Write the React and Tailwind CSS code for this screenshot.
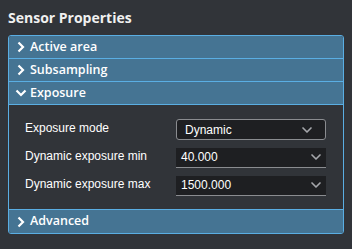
import { ChevronDown } from "lucide-react";

const sans = { fontFamily: '"Open Sans", sans-serif' };

function Chevron({ open }) {
    return open ? (
        <svg width="12" height="10" viewBox="0 0 12 10" className="ml-[3px] mr-[3px]">
            <polyline points="1.5,2.5 6,7 10.5,2.5" fill="none" stroke="white" strokeWidth="2.2" />
        </svg>
    ) : (
        <svg width="10" height="12" viewBox="0 0 10 12" className="ml-[4px] mr-[4px]">
            <polyline points="2.5,1.5 7,6 2.5,10.5" fill="none" stroke="white" strokeWidth="2.2" />
        </svg>
    );
}

function Header({ title, open, last }) {
    return (
        <div
            className={`flex h-[23px] items-center bg-[#457493] pl-[3px] text-white ${last ? "" : "border-b border-[#5aaee3]"}`}
        >
            <Chevron open={open} />
            <span className="text-[12.5px] font-semibold" style={sans}>
                {title}
            </span>
        </div>
    );
}

function Field({ label, value, boxed }) {
    return (
        <div className="flex h-[21px] items-center">
            <span className="w-[151px] pb-[3px] text-[12px] text-white">{label}</span>
            {boxed ? (
                <div className="flex h-[21px] w-[150px] items-center justify-between rounded-[3px] border border-[#8a8c90] bg-[#1e1f22] pl-[8px] pr-[10px]">
                    <span className="text-[12px] text-white">{value}</span>
                    <ChevronDown size={16} strokeWidth={2.5} className="text-[#a5a7ab]" />
                </div>
            ) : (
                <div className="flex h-[20px] w-[150px] items-center justify-between border-b border-[#8a8c90] bg-[#1e1f22] pl-[5px] pr-[2px]">
                    <span className="text-[12px] text-white">{value}</span>
                    <ChevronDown size={16} strokeWidth={2.5} className="text-[#a5a7ab]" />
                </div>
            )}
        </div>
    );
}

export default function App() {
    return (
        <div
            className="h-[249px] w-[352px] bg-[#313439] px-[8px] pt-[7px]"
            style={{ fontFamily: '"Liberation Sans", Arial, sans-serif' }}
        >
            <h1 className="mb-[6px] text-[14px] font-bold leading-[22px] text-[#f0f0f0]" style={sans}>
                Sensor Properties
            </h1>
            <div className="w-[336px] overflow-hidden rounded-[3px] border border-[#5aaee3]">
                <Header title="Active area" />
                <Header title="Subsampling" />
                <Header title="Exposure" open />
                <div className="flex flex-col gap-[7px] border-b border-[#5aaee3] pb-[13px] pl-[16px] pt-[14px]">
                    <Field label="Exposure mode" value="Dynamic" boxed />
                    <Field label="Dynamic exposure min" value="40.000" />
                    <Field label="Dynamic exposure max" value="1500.000" />
                </div>
                <Header title="Advanced" last />
            </div>
        </div>
    );
}
